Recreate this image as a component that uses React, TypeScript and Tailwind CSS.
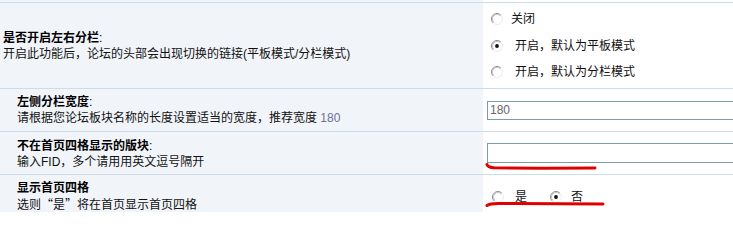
import React from "react";

function Radio({ checked }: { checked?: boolean }) {
  return (
    <svg width="12" height="12" viewBox="0 0 12 12" className="shrink-0">
      <circle cx="6" cy="6" r="5.5" fill="#ffffff" />
      <path d="M2.11 9.89 A5.5 5.5 0 0 1 9.89 2.11" fill="none" stroke="#8c8c8c" strokeWidth="1" />
      <path d="M9.89 2.11 A5.5 5.5 0 0 1 2.11 9.89" fill="none" stroke="#ececec" strokeWidth="1" />
      <path d="M2.82 9.18 A4.5 4.5 0 0 1 9.18 2.82" fill="none" stroke="#c4c4c4" strokeWidth="1" />
      {checked && <circle cx="6" cy="6" r="1.9" fill="#111111" />}
    </svg>
  );
}

const font = "font-['Liberation_Sans','Noto_Sans_CJK_SC',sans-serif]";
const cjk = "font-['Noto_Sans_CJK_SC',sans-serif]";

export default function App() {
  return (
    <div className={`relative w-[733px] h-[212px] overflow-hidden bg-white text-[12px] leading-[16px] text-[#111111] ${font}`}>
      {/* top spacer */}
      <div className="flex h-[2px]">
        <div className="w-[483px] shrink-0 bg-[#f1f5fa]" />
        <div className="flex-1 bg-white" />
      </div>

      {/* Row 1 */}
      <div className="flex h-[86px] border-t border-[#cbdcec]">
        <div className="w-[483px] shrink-0 bg-[#f1f5fa] flex flex-col justify-center pl-[3px] pt-[1px]">
          <div className="font-bold text-black">是否开启左右分栏<span className="font-normal">:</span></div>
          <div>开启此功能后，论坛的头部会出现切换的链接(平板模式/分栏模式)</div>
        </div>
        <div className="flex-1 min-w-0 bg-white flex flex-col justify-center pl-[8px]">
          <label className="flex items-center h-[26px]">
            <Radio />
            <span className="ml-[8px]">关闭</span>
          </label>
          <label className="flex items-center h-[27px]">
            <Radio checked />
            <span className="ml-[12px]">开启，默认为平板模式</span>
          </label>
          <label className="flex items-center h-[26px]">
            <Radio />
            <span className="ml-[12px]">开启，默认为分栏模式</span>
          </label>
        </div>
      </div>

      {/* Row 2 */}
      <div className="flex h-[43px] border-t border-[#cbdcec]">
        <div className="w-[483px] shrink-0 bg-[#f1f5fa] flex flex-col justify-center pl-[17px]">
          <div className="font-bold text-black">左侧分栏宽度<span className="font-normal">:</span></div>
          <div>
            请根据您论坛板块名称的长度设置适当的宽度，推荐宽度 <span className="text-[#6e6e96]">180</span>
          </div>
        </div>
        <div className="flex-1 min-w-0 bg-white flex items-center pl-[4px]">
          <div className="w-[300px] shrink-0 h-[19px] border border-[#7f9aa8] bg-white flex items-center pl-[2px] text-[12px] text-[#666666] font-['Liberation_Sans',sans-serif]">
            180
          </div>
        </div>
      </div>

      {/* Row 3 */}
      <div className="flex h-[43px] border-t border-[#cbdcec]">
        <div className="w-[483px] shrink-0 bg-[#f1f5fa] flex flex-col justify-center pl-[17px] pt-[2px]">
          <div className="font-bold text-black">不在首页四格显示的版块<span className="font-normal">:</span></div>
          <div>输入FID，多个请用用英文逗号隔开</div>
        </div>
        <div className="flex-1 min-w-0 bg-white flex items-start pt-[11px] pl-[4px]">
          <div className="w-[300px] shrink-0 h-[20px] border border-[#7f9aa8] bg-white" />
        </div>
      </div>

      {/* Row 4 */}
      <div className="flex h-[43px] border-t border-[#cbdcec]">
        <div className="w-[483px] shrink-0 bg-[#f1f5fa] flex flex-col pt-[5px] pl-[17px]">
          <div className="font-bold text-black">显示首页四格</div>
          <div>
            选则<span className={cjk}>“是”</span>将在首页显示首页四格
          </div>
        </div>
        <div className="flex-1 min-w-0 bg-white flex items-start pt-[14px] pl-[9px]">
          <label className="flex items-center">
            <Radio />
            <span className="ml-[11px]">是</span>
          </label>
          <label className="flex items-center ml-[23px]">
            <Radio checked />
            <span className="ml-[9px]">否</span>
          </label>
        </div>
      </div>

      {/* red hand-drawn annotations */}
      <svg className="absolute left-0 top-0 pointer-events-none" width="733" height="212" viewBox="0 0 733 212">
        <path
          d="M487 164.5 Q488 167.5 494 167.8 L540 168.3 L595 168"
          fill="none"
          stroke="#e10000"
          strokeWidth="3"
          strokeLinecap="round"
          strokeLinejoin="round"
        />
        <path
          d="M487 205.5 Q490 203.3 500 203.5 L560 203.8 L603 204"
          fill="none"
          stroke="#e10000"
          strokeWidth="3"
          strokeLinecap="round"
          strokeLinejoin="round"
        />
      </svg>
    </div>
  );
}
